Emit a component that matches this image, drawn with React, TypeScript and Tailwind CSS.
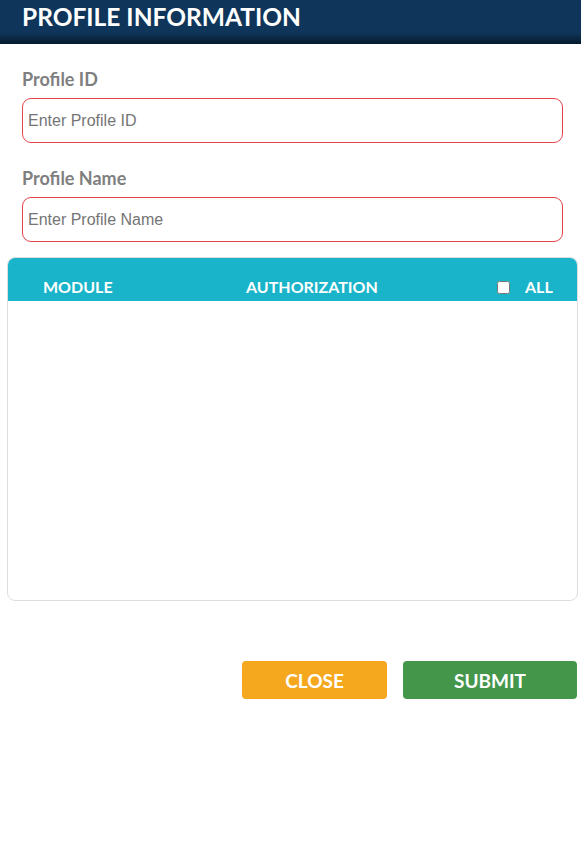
import React from "react";

export default function App() {
  return (
    <div className="w-[581px] min-h-[841px] bg-white" style={{ fontFamily: "Lato, 'Noto Sans', sans-serif" }}>
      {/* header bar */}
      <div className="h-[44px] bg-linear-to-b from-[#0f355a] via-[#0f355a] via-75% to-[#061a2d] flex items-start pt-[5px] px-[22px]">
        <h1 className="text-white text-[24.5px] font-bold leading-none">
          PROFILE INFORMATION
        </h1>
      </div>

      <div className="px-[22px] pt-[26px]">
        <label className="block text-[#7f7f7f] text-[18px] font-bold leading-none mb-[10px]">Profile ID</label>
        <input
          type="text"
          placeholder="Enter Profile ID"
          className="w-[541px] h-[45px] border border-[#e2454a] rounded-[9px] px-[5px] text-[16px] placeholder:text-[#757575] outline-none"
          style={{ fontFamily: "Arial, 'Liberation Sans', sans-serif" }}
        />

        <label className="block text-[#7f7f7f] text-[18px] font-bold leading-none mt-[26px] mb-[10px]">Profile Name</label>
        <input
          type="text"
          placeholder="Enter Profile Name"
          className="w-[541px] h-[45px] border border-[#e2454a] rounded-[9px] px-[5px] text-[16px] placeholder:text-[#757575] outline-none"
          style={{ fontFamily: "Arial, 'Liberation Sans', sans-serif" }}
        />
      </div>

      {/* authorization table */}
      <div className="ml-[7px] mt-[15px] w-[571px] h-[344px] border border-[#dedede] rounded-[8px] overflow-hidden">
        <div className="h-[43px] bg-[#19b4c9] flex items-end pb-[6px] text-white text-[16px] font-bold leading-none">
          <span className="ml-[35px] w-[203px]">MODULE</span>
          <span className="w-[251px]">AUTHORIZATION</span>
          <span className="flex items-center">
            <input type="checkbox" className="w-[13px] h-[13px] m-0" />
            <span className="ml-[15px]">ALL</span>
          </span>
        </div>
      </div>

      {/* actions */}
      <div className="flex justify-end gap-[16px] pr-[4px] mt-[60px]">
        <button className="w-[145px] h-[38px] bg-[#f5a81e] rounded-[4px] text-white text-[19px] font-bold leading-none">
          CLOSE
        </button>
        <button className="w-[174px] h-[38px] bg-[#43964a] rounded-[4px] text-white text-[19px] font-bold leading-none">
          SUBMIT
        </button>
      </div>
    </div>
  );
}
